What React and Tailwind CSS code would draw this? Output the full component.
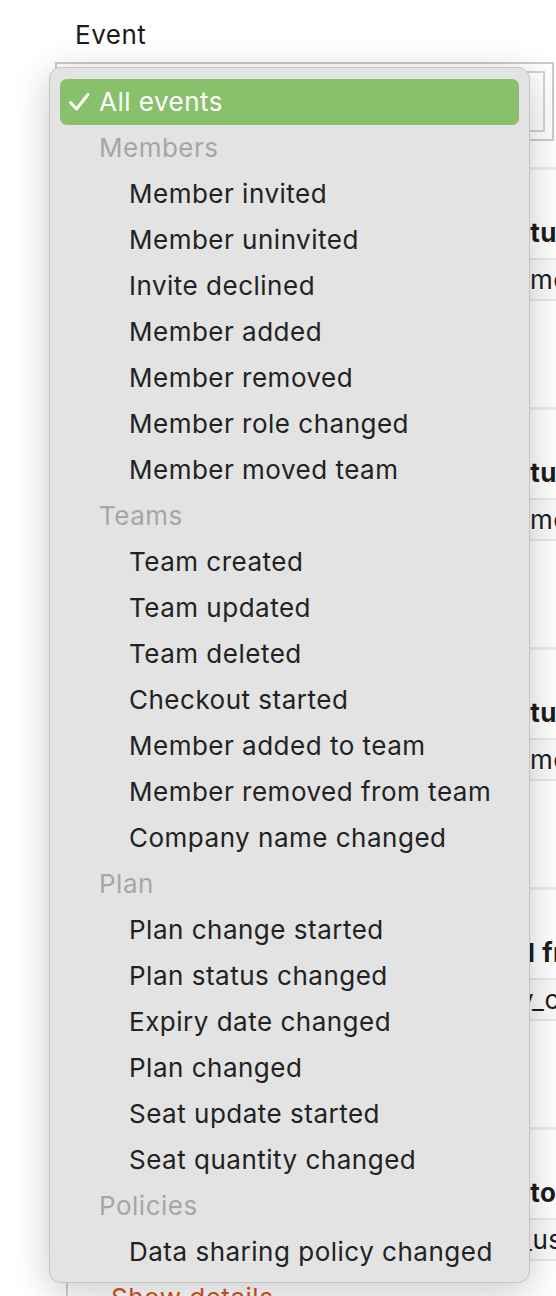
import React from "react";

const groups = [
  { title: "Members", items: ["Member invited", "Member uninvited", "Invite declined", "Member added", "Member removed", "Member role changed", "Member moved team"] },
  { title: "Teams", items: ["Team created", "Team updated", "Team deleted", "Checkout started", "Member added to team", "Member removed from team", "Company name changed"] },
  { title: "Plan", items: ["Plan change started", "Plan status changed", "Expiry date changed", "Plan changed", "Seat update started", "Seat quantity changed"] },
  { title: "Policies", items: ["Data sharing policy changed"] },
];

const entries = [
  { grid: "grid-cols-[195px_193px_1fr]", a: "Event", b: "Actor", c: "Status", va: "member_invited", vb: "owner", vc: "Promoted" },
  { grid: "grid-cols-[195px_193px_1fr]", a: "Event", b: "Actor", c: "Status", va: "member_added", vb: "owner", vc: "Promoted" },
  { grid: "grid-cols-[195px_193px_1fr]", a: "Event", b: "Actor", c: "Status", va: "member_removed", vb: "admin", vc: "Promoted" },
  { grid: "grid-cols-[207px_111px_1fr]", a: "Event", b: "Actor", c: "Changed from", va: "role_changed", vb: "owner", vc: "company_collaborator" },
  { grid: "grid-cols-[207px_99px_1fr]", a: "Event", b: "Actor", c: "Changed to", va: "role_changed", vb: "owner", vc: "company_user" },
];

function Check() {
  return (
    <svg width="22" height="20" viewBox="0 0 22 20" className="shrink-0">
      <path d="M2.5 10.5 L8.5 17 L20 2.5" fill="none" stroke="white" strokeWidth="3" strokeLinecap="round" strokeLinejoin="round" />
    </svg>
  );
}

export default function App() {
  return (
    <div className="relative w-[556px] h-[1296px] overflow-hidden bg-white text-[#1c1c1c] font-['Inter',sans-serif] tracking-[0.5px]">
      <div className="pl-[75px] pt-[19px] h-[62px] text-[26px] leading-[32px]">Event</div>
      <div className="ml-[55px] mr-[2px] h-[79px] border-2 border-[#cbcbcb] p-[7px]">
        <div className="h-full border-2 border-[#d2d2d2]" />
      </div>
      <div className="mt-[26px] ml-[55px]">
        {entries.map((e, i) => (
          <div key={i} className="h-[240px] border-t-[3px] border-[#ececec]">
            <div className={`grid ${e.grid} gap-x-[12px] pl-[20px] pt-[47px] h-[88px] text-[26px] leading-[32px] font-bold whitespace-nowrap`}>
              <div>{e.a}</div>
              <div>{e.b}</div>
              <div>{e.c}</div>
            </div>
            <div className="h-[43px] border-y-2 border-[#e8e8e8] bg-[#fafafa]">
              <div className={`grid ${e.grid} gap-x-[12px] pl-[20px] text-[26px] leading-[39px] whitespace-nowrap`}>
                <div>{e.va}</div>
                <div>{e.vb}</div>
                <div>{e.vc}</div>
              </div>
            </div>
            <div className="ml-[11px] mt-[7px] h-[80px] border-l-2 border-[#d0d0d0] pl-[43px] pt-[14px] text-[26px] leading-[32px] text-[#d6531f]">
              Show details
            </div>
          </div>
        ))}
      </div>

      <div className="absolute left-[49px] top-[67px] w-[481px] h-[1216px] rounded-[12px] border border-[#c4c4c4] bg-[#e3e3e3] shadow-[0_8px_36px_rgba(0,0,0,0.22)] pt-[11px] pb-[7px] px-[10px] text-[26px]">
        <div className="flex items-center h-[46px] rounded-[7px] bg-[#88c06b] text-white pl-[8px] gap-[9px]">
          <Check />
          <span className="leading-[46px]">All events</span>
        </div>
        {groups.map((g) => (
          <div key={g.title}>
            <div className="h-[46px] leading-[46px] pl-[39px] text-[#a6a6a6]">{g.title}</div>
            {g.items.map((it) => (
              <div key={it} className="h-[46px] leading-[46px] pl-[69px] text-[#222222] whitespace-nowrap">{it}</div>
            ))}
          </div>
        ))}
      </div>
    </div>
  );
}
